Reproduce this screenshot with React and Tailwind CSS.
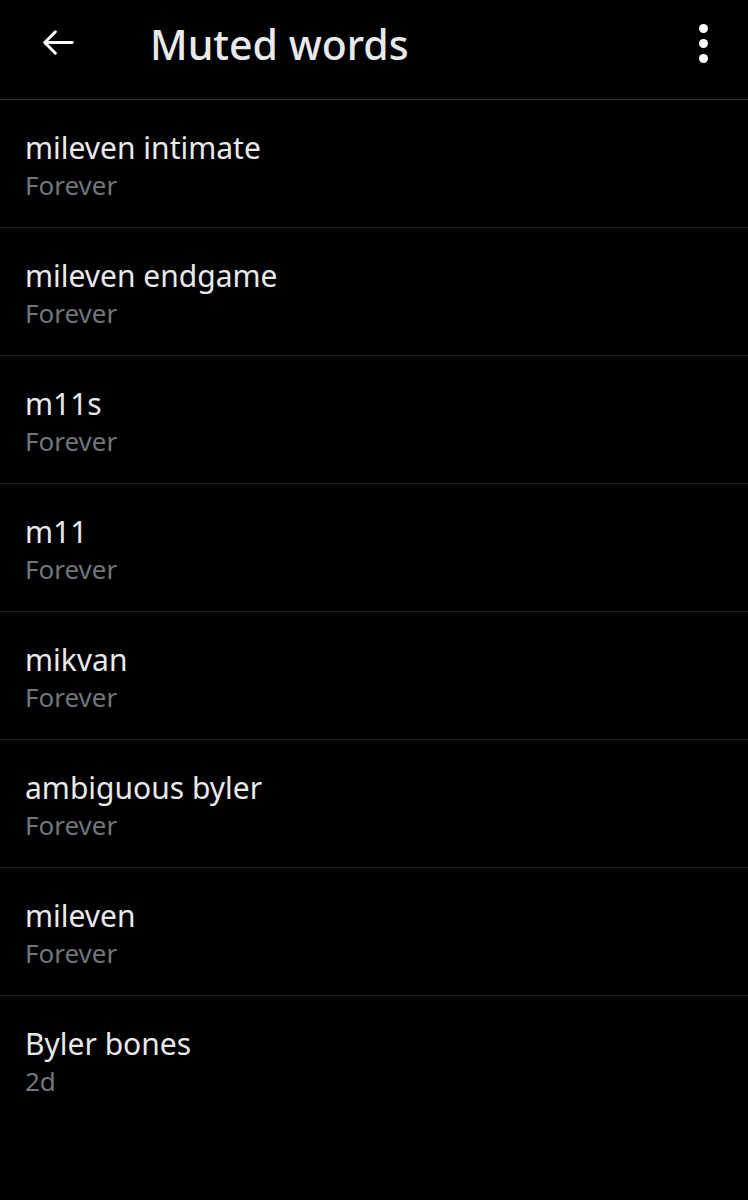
const words = [
  { word: "mileven intimate", time: "Forever" },
  { word: "mileven endgame", time: "Forever" },
  { word: "m11s", time: "Forever" },
  { word: "m11", time: "Forever" },
  { word: "mikvan", time: "Forever" },
  { word: "ambiguous byler", time: "Forever" },
  { word: "mileven", time: "Forever" },
  { word: "Byler bones", time: "2d" },
];

const App = () => {
  return (
    <div
      className="min-h-[1200px] w-[748px] bg-black text-[#e7e9ea]"
      style={{ fontFamily: "'Noto Sans', Roboto, sans-serif" }}
    >
      <div className="h-[100px] flex items-start pt-[24px] pl-[40px] pr-[40px] border-b border-[#2f3336]">
        <svg
          className="w-[37px] h-[37px]"
          viewBox="0 0 24 24"
          fill="none"
          stroke="#ffffff"
          strokeWidth="1.9"
          strokeLinecap="round"
          strokeLinejoin="round"
        >
          <path d="M21 12H3M10 5L3 12L10 19" />
        </svg>
        <h1 className="ml-[73px] text-[41px] font-medium leading-none">
          Muted words
        </h1>
        <div className="ml-auto flex flex-col items-center gap-[6px]">
          <span className="w-[9px] h-[9px] rounded-full bg-white" />
          <span className="w-[9px] h-[9px] rounded-full bg-white" />
          <span className="w-[9px] h-[9px] rounded-full bg-white" />
        </div>
      </div>
      {words.map((e, i) => {
        return (
          <div
            key={i}
            className={`h-[128px] px-[25px] pt-[27px] ${
              i !== words.length - 1 ? "border-b border-[#1c1f22]" : ""
            }`}
          >
            <div className="text-[30px] leading-[42px]">{e.word}</div>
            <div className="text-[26px] leading-[32px] text-[#71767b]">{e.time}</div>
          </div>
        );
      })}
    </div>
  );
};

export default App;
